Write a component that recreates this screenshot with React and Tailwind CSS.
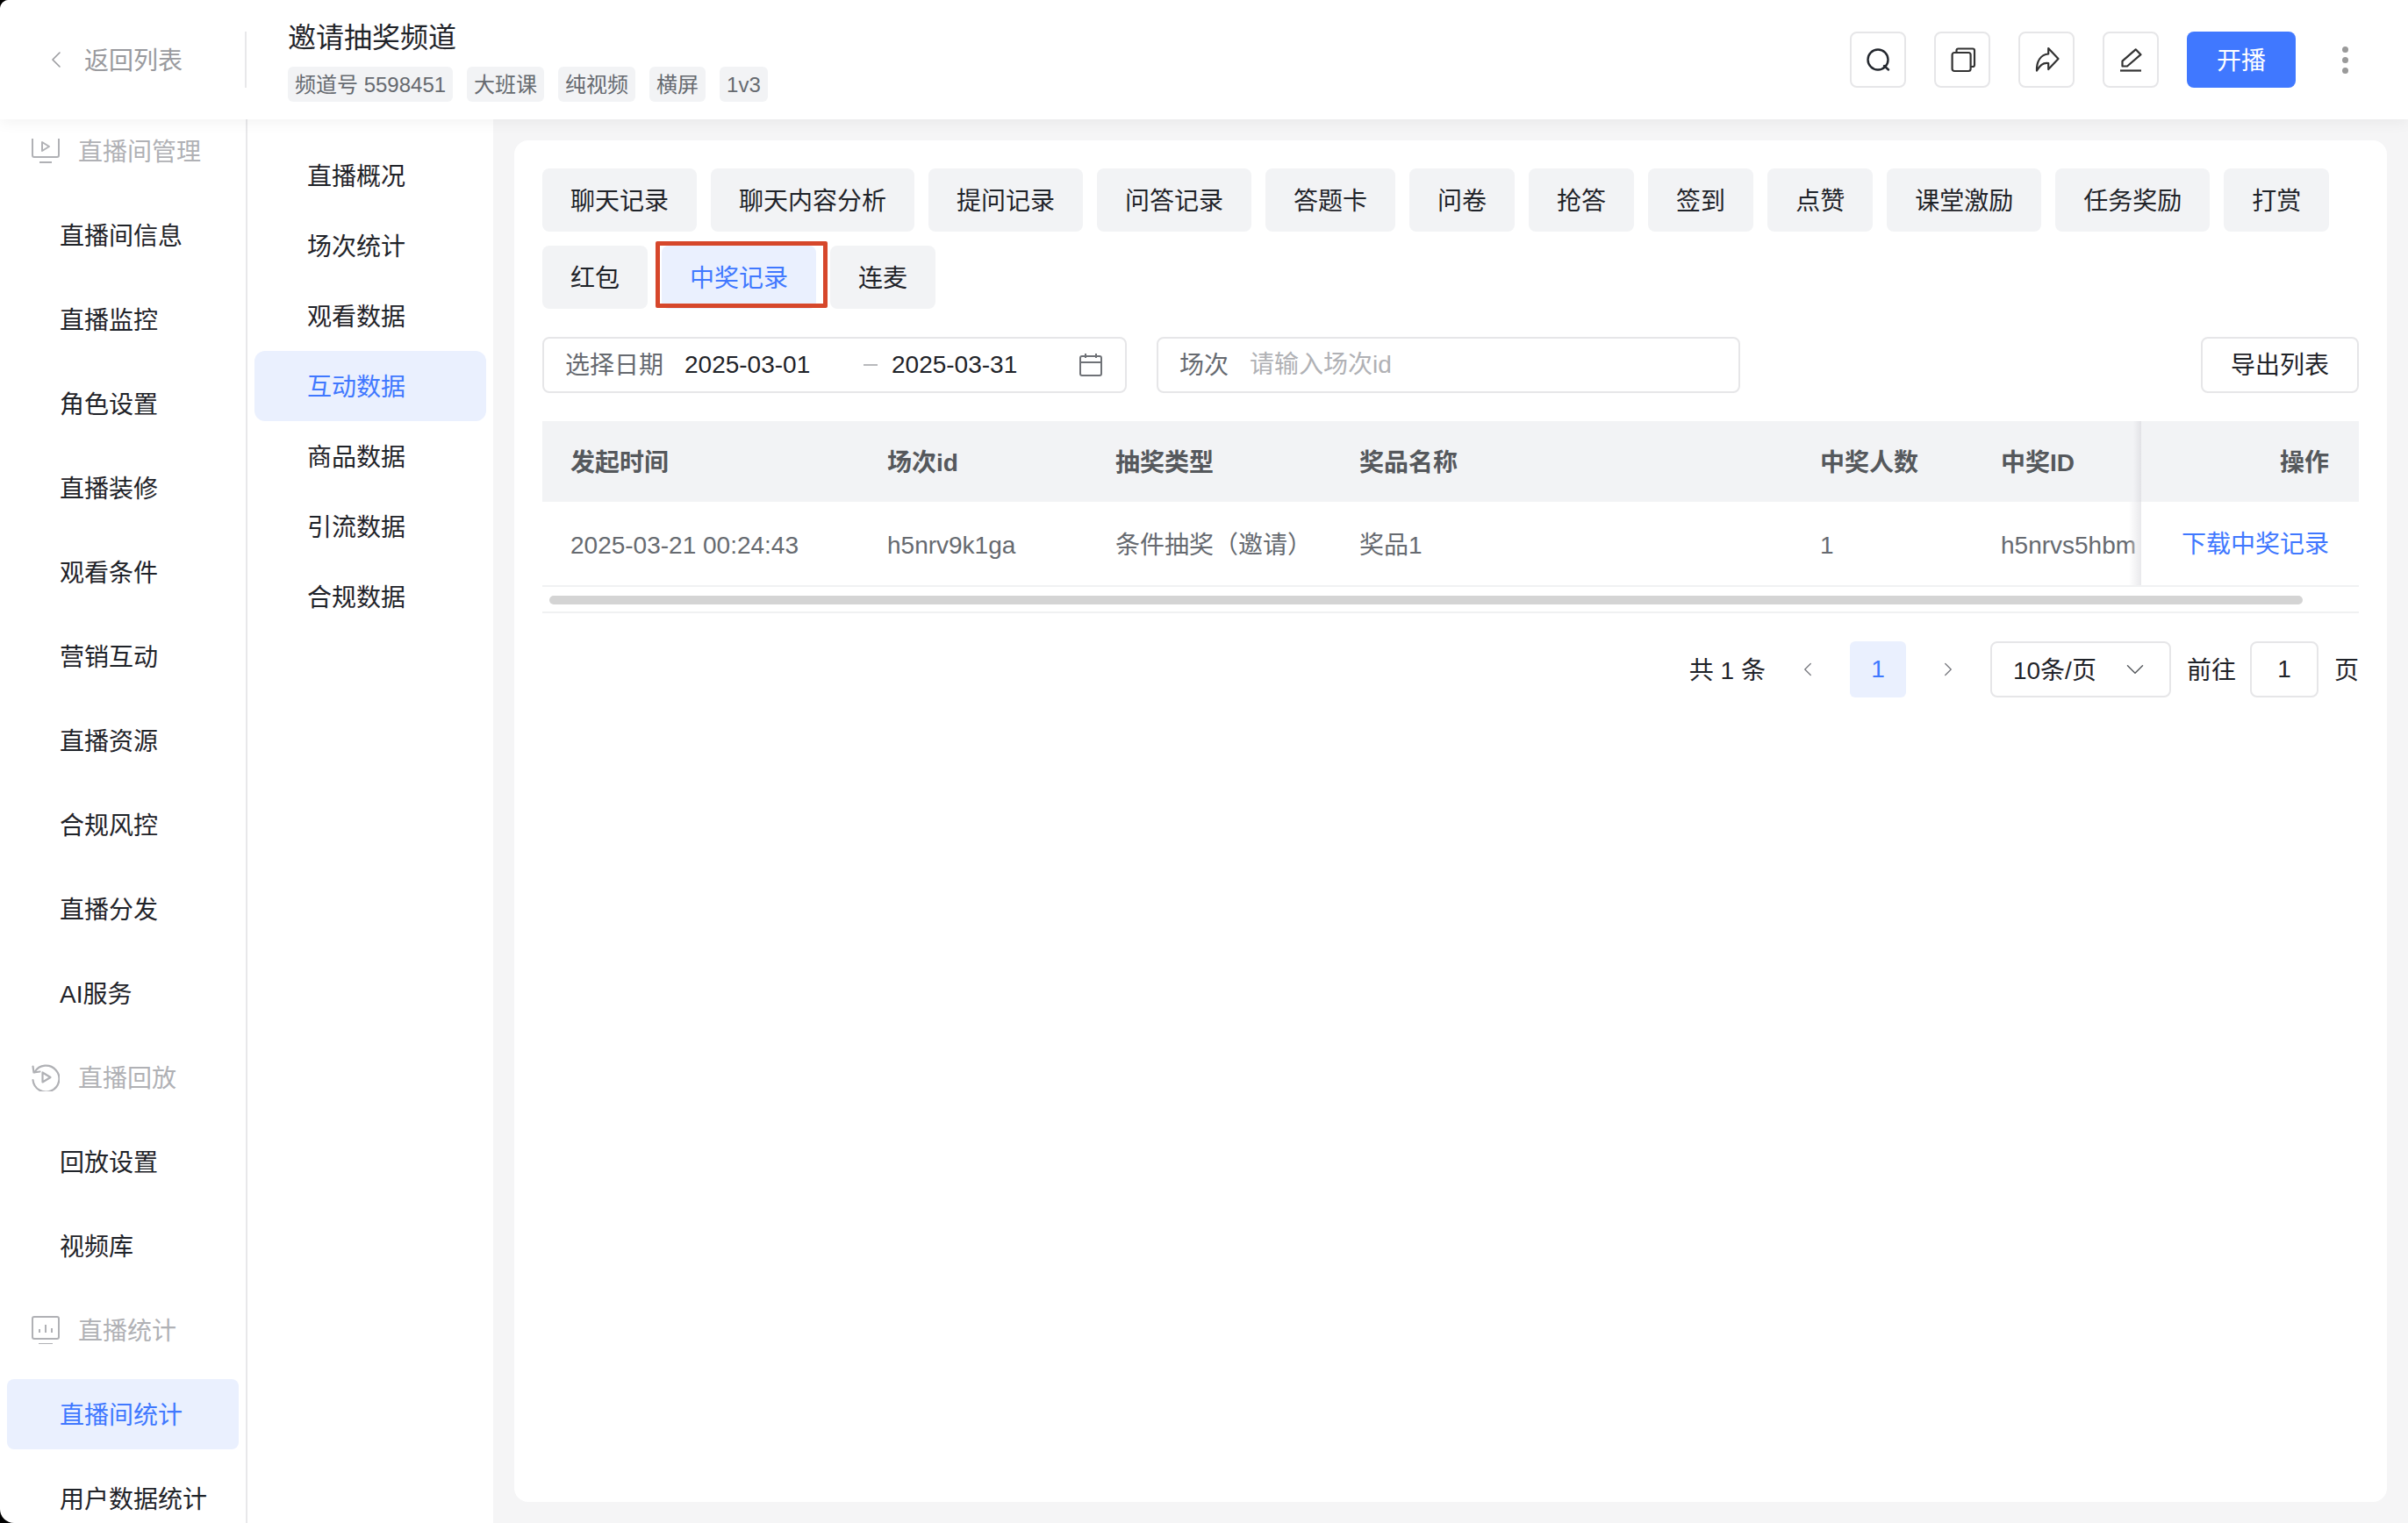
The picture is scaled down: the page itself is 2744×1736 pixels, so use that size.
import React from "react";
import { ChevronLeft, ChevronRight, ChevronDown } from "lucide-react";

const tabs = ["聊天记录", "聊天内容分析", "提问记录", "问答记录", "答题卡", "问卷", "抢答", "签到", "点赞", "课堂激励", "任务奖励", "打赏", "红包", "中奖记录", "连麦"];
const tags = ["频道号 5598451", "大班课", "纯视频", "横屏", "1v3"];
const subMenu = ["直播概况", "场次统计", "观看数据", "互动数据", "商品数据", "引流数据", "合规数据"];

const menu = [
  { group: "直播间管理", icon: "live" },
  { label: "直播间信息" },
  { label: "直播监控" },
  { label: "角色设置" },
  { label: "直播装修" },
  { label: "观看条件" },
  { label: "营销互动" },
  { label: "直播资源" },
  { label: "合规风控" },
  { label: "直播分发" },
  { label: "AI服务" },
  { group: "直播回放", icon: "replay" },
  { label: "回放设置" },
  { label: "视频库" },
  { group: "直播统计", icon: "stats" },
  { label: "直播间统计", active: true },
  { label: "用户数据统计" },
];

const columns = [
  { title: "发起时间", value: "2025-03-21 00:24:43", width: "w-[361px]" },
  { title: "场次id", value: "h5nrv9k1ga", width: "w-[260px]" },
  { title: "抽奖类型", value: "条件抽奖（邀请）", width: "w-[278px]" },
  { title: "奖品名称", value: "奖品1", width: "w-[525px]" },
  { title: "中奖人数", value: "1", width: "w-[206px]" },
  { title: "中奖ID", value: "h5nrvs5hbm", width: "w-[192px]" },
];

const GroupIcon = ({ type }) => {
  if (type === "live") {
    return (
      <svg viewBox="0 0 32 32" className="w-8 h-8 shrink-0" fill="none" stroke="#b0b1b5" strokeWidth="2">
        <path d="M1 2v19a2 2 0 0 0 2 2h26a2 2 0 0 0 2-2V2" />
        <path d="M12 6v10l8-5z" strokeLinejoin="round" />
        <path d="M9 29h14" />
      </svg>
    );
  }
  if (type === "replay") {
    return (
      <svg viewBox="0 0 32 32" className="w-8 h-8 shrink-0" fill="none" stroke="#b0b1b5" strokeWidth="2.2">
        <path d="M3.5 10A15 15 0 1 1 1.5 19" strokeLinecap="round" />
        <path d="M1.5 3.5 2.5 10.5 9.5 9.5" strokeLinecap="round" strokeLinejoin="round" />
        <path d="M12.5 10.5v11l9-5.5z" strokeLinejoin="round" />
      </svg>
    );
  }
  return (
    <svg viewBox="0 0 32 32" className="w-8 h-8 shrink-0" fill="none" stroke="#b0b1b5" strokeWidth="2">
      <rect x="1" y="1" width="30" height="25" rx="2" />
      <path d="M9 19v-4M16 19v-9M23 19v-5" />
      <path d="M8 32h16" />
    </svg>
  );
};

const IconButton = ({ children }) => (
  <button className="w-16 h-16 flex items-center justify-center border-2 border-[#e6e6e8] rounded-lg bg-white">
    {children}
  </button>
);

const App = () => {
  return (
    <div className="w-screen h-screen bg-black overflow-hidden font-['Liberation_Sans','Noto_Sans_CJK_SC',sans-serif]">
      <div className="w-full h-full flex flex-col bg-white rounded-tl-[10px] rounded-bl-[16px] overflow-hidden text-[#1f2329] text-[28px] leading-10">
        {/* Header */}
        <header className="relative z-10 h-[136px] shrink-0 flex bg-white shadow-[0_4px_16px_rgba(0,0,0,0.05)]">
          <div className="w-[281px] shrink-0 flex items-center">
            <div className="w-[279px] h-16 flex items-center pl-12 gap-4 text-[#999a9e]">
              <ChevronLeft size={32} strokeWidth={1.2} className="shrink-0" />
              <span className="pt-1">返回列表</span>
            </div>
            <div className="w-0.5 h-16 bg-[#e8e8ea]" />
          </div>
          <div className="pl-[47px] pt-[23px]">
            <div className="h-10 text-[32px] leading-10">邀请抽奖频道</div>
            <div className="flex gap-4 mt-[13px]">
              {tags.map((tag) => (
                <span key={tag} className="h-10 px-2 pt-0.5 flex items-center bg-[#f2f3f5] rounded-md text-2xl text-[#666a70] whitespace-nowrap">
                  {tag}
                </span>
              ))}
            </div>
          </div>
          <div className="ml-auto flex items-center gap-8 pr-12">
            <IconButton>
              <svg viewBox="0 0 32 32" className="w-8 h-8" fill="none" stroke="#23272e" strokeWidth="2.4">
                <circle cx="16" cy="16" r="11.5" />
                <path d="M23 23l5 4.5" strokeLinecap="round" />
              </svg>
            </IconButton>
            <IconButton>
              <svg viewBox="0 0 32 32" className="w-8 h-8" fill="none" stroke="#333" strokeWidth="2.2" strokeLinejoin="round">
                <rect x="4.6" y="8" width="21" height="21" rx="2.5" />
                <path d="M9.5 8V5.5a2 2 0 0 1 2-2H28a2 2 0 0 1 2 2V22a2 2 0 0 1-2 2h-2.4" />
              </svg>
            </IconButton>
            <IconButton>
              <svg viewBox="0 0 32 32" className="w-8 h-8" fill="none" stroke="#333" strokeWidth="2.2" strokeLinejoin="round">
                <path d="M18.2 3 29.5 15 18.2 27v-7C11.5 19 8.5 23 5 28.5 4.5 18 9.5 10 18.2 9.5z" />
              </svg>
            </IconButton>
            <IconButton>
              <svg viewBox="0 0 32 32" className="w-8 h-8" fill="none" stroke="#333" strokeWidth="2.2" strokeLinejoin="round">
                <path d="M21.7 4.3 27.5 10.2 12 23.5H6.5V17.7z" />
                <path d="M4 28.5h24" />
              </svg>
            </IconButton>
            <button className="w-[124px] h-16 pt-1 bg-[#4078ff] rounded-lg text-white">开播</button>
            <div className="w-12 flex flex-col items-center gap-[5px]">
              <span className="w-[7px] h-[7px] rounded-full bg-[#9a9a9a]" />
              <span className="w-[7px] h-[7px] rounded-full bg-[#9a9a9a]" />
              <span className="w-[7px] h-[7px] rounded-full bg-[#9a9a9a]" />
            </div>
          </div>
        </header>

        <div className="flex-1 flex min-h-0">
          {/* Main menu */}
          <aside className="w-[282px] shrink-0 border-r-2 border-[#e8e8ea] overflow-hidden">
            <div className="-mt-1 flex flex-col gap-4">
              {menu.map((item) =>
                item.group ? (
                  <div key={item.group} className="h-20 shrink-0 flex items-center pl-9 gap-[21px] text-[#b0b1b5]">
                    <GroupIcon type={item.icon} />
                    <span className="pt-1">{item.group}</span>
                  </div>
                ) : (
                  <div
                    key={item.label}
                    className={`h-20 shrink-0 mx-2 pl-[60px] pt-1 flex items-center rounded-lg ${item.active ? "bg-[#eaf0fe] text-[#4078ff]" : ""}`}
                  >
                    {item.label}
                  </div>
                )
              )}
            </div>
          </aside>

          {/* Sub menu */}
          <aside className="w-[280px] shrink-0 pt-6 px-2">
            {subMenu.map((item) => (
              <div
                key={item}
                className={`h-20 pl-[60px] pt-1 flex items-center rounded-xl ${item === "互动数据" ? "bg-[#eaf0fe] text-[#4078ff]" : ""}`}
              >
                {item}
              </div>
            ))}
          </aside>

          {/* Content */}
          <main className="flex-1 min-w-0 bg-[#f5f5f6] p-6">
            <div className="h-full bg-white rounded-2xl p-8">
              <div className="flex flex-wrap gap-4">
                {tabs.map((tab) => (
                  <div key={tab} className="relative">
                    <button
                      className={`h-[72px] px-8 pt-[3px] rounded-lg whitespace-nowrap ${tab === "中奖记录" ? "bg-[#eaf0fe] text-[#4078ff]" : "bg-[#f2f3f5]"}`}
                    >
                      {tab}
                    </button>
                    {tab === "中奖记录" && (
                      <div className="absolute -left-[7px] -top-[5px] w-[196px] h-[76px] border-[5px] border-[#d6472b] rounded-[2px]" />
                    )}
                  </div>
                ))}
              </div>

              {/* Filters */}
              <div className="flex mt-8 gap-[34px]">
                <div className="w-[666px] h-16 border-2 border-[#e6e6e8] rounded-lg flex items-center pl-6 pr-[26px]">
                  <span className="w-[136px] pt-0.5 text-[#666a70]">选择日期</span>
                  <span className="w-[204px]">2025-03-01</span>
                  <span className="w-4 h-0.5 bg-[#b8b9bc]" />
                  <span className="ml-4">2025-03-31</span>
                  <svg viewBox="0 0 26 26" className="ml-auto w-[26px] h-[26px]" fill="none" stroke="#6f7277" strokeWidth="2">
                    <rect x="1" y="3" width="24" height="22" rx="2" />
                    <path d="M1 10h24M7 0v5M19 0v5" />
                  </svg>
                </div>
                <div className="w-[665px] h-16 border-2 border-[#e6e6e8] rounded-lg flex items-center pl-6">
                  <span className="w-[80px] pt-0.5 text-[#666a70]">场次</span>
                  <span className="text-[#b0b1b5]">请输入场次id</span>
                </div>
                <button className="ml-auto w-[180px] h-16 pt-0.5 border-2 border-[#e6e6e8] rounded-lg">导出列表</button>
              </div>

              {/* Table */}
              <div className="mt-8 border-b-2 border-[#f0f1f2]">
                <div className="relative flex border-b-2 border-[#f0f1f2]">
                  <div className="w-[1822px] overflow-hidden">
                    <div className="flex h-[92px] pt-1 bg-[#f2f3f5] font-bold text-[#55585c]">
                      {columns.map((col) => (
                        <div key={col.title} className={`${col.width} shrink-0 pl-8 flex items-center`}>{col.title}</div>
                      ))}
                    </div>
                    <div className="flex h-[95px] pt-1 text-[#666a70]">
                      {columns.map((col) => (
                        <div key={col.title} className={`${col.width} shrink-0 pl-8 flex items-center whitespace-nowrap overflow-hidden`}>{col.value}</div>
                      ))}
                    </div>
                  </div>
                  <div className="absolute left-[1808px] top-[92px] w-[14px] h-[95px] bg-gradient-to-r from-transparent to-[#e9e9ec]" />
                  <div className="absolute left-[1813px] top-0 w-[9px] h-[92px] bg-gradient-to-r from-transparent to-[#e2e2e6]" />
                  <div className="w-[248px]">
                    <div className="h-[92px] pt-1 bg-[#f2f3f5] font-bold text-[#55585c] flex items-center justify-end pr-[34px]">操作</div>
                    <div className="h-[95px] pt-0.5 flex items-center justify-end pr-[34px] text-[#4078ff]">下载中奖记录</div>
                  </div>
                </div>
                <div className="h-7 pt-2.5 pl-2 pr-16">
                  <div className="h-2.5 rounded-full bg-[#d4d4d4]" />
                </div>
              </div>

              {/* Pagination */}
              <div className="flex justify-end items-center h-16 mt-8 gap-4">
                <span className="pt-1 whitespace-nowrap">共 1 条</span>
                <span className="w-16 flex justify-center text-[#77797e]"><ChevronLeft size={26} strokeWidth={1.2} /></span>
                <span className="w-16 h-16 flex items-center justify-center bg-[#eaf0fe] text-[#4078ff] rounded-md">1</span>
                <span className="w-16 flex justify-center text-[#77797e]"><ChevronRight size={26} strokeWidth={1.2} /></span>
                <div className="w-[206px] h-16 border-2 border-[#e6e6e8] rounded-lg flex items-center justify-between pl-6 pr-[22px]">
                  <span className="pt-1">10条/页</span>
                  <ChevronDown size={34} strokeWidth={1} className="text-[#55585c]" />
                </div>
                <span className="ml-0.5 pt-1">前往</span>
                <div className="w-[78px] h-16 border-2 border-[#e6e6e8] rounded-lg flex items-center justify-center">1</div>
                <span className="ml-0.5 pt-1">页</span>
              </div>
            </div>
          </main>
        </div>
      </div>
    </div>
  );
};

export default App;
